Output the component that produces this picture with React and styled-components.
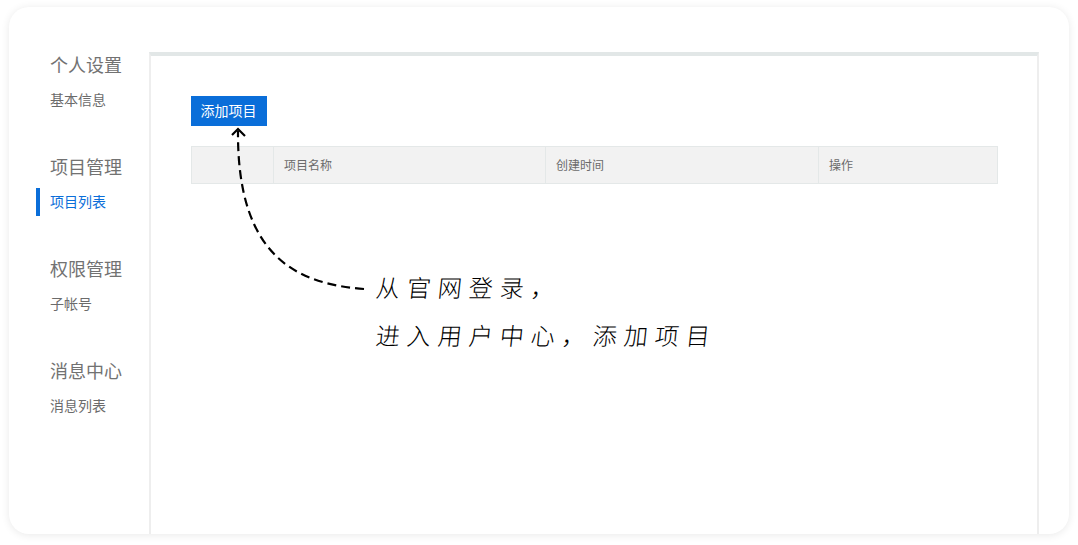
import styled, { createGlobalStyle } from "styled-components";

const GlobalStyle = createGlobalStyle`
  html, body {
    margin: 0;
    padding: 0;
    background: #fff;
  }
  body {
    font-family: "Noto Sans CJK SC", "Liberation Sans", sans-serif;
    overflow: hidden;
  }
`;

const Page = styled.div`
  box-sizing: border-box;
  width: 1078px;
  height: 545px;
  padding: 7px 9px 11px;
`;
const Card = styled.div`
  display: flex;
  height: 100%;
  padding-right: 30px;
  background: #fff;
  border-radius: 20px;
  box-shadow: 0 1px 8px rgba(0, 0, 0, 0.09);
  overflow: hidden;
`;
const Sidebar = styled.div`
  box-sizing: border-box;
  width: 140px;
  padding: 43px 0 0 41px;
  display: flex;
  flex-direction: column;
  gap: 38px;
`;
const Group = styled.div`
  display: flex;
  flex-direction: column;
  gap: 6px;
`;
const GroupTitle = styled.div`
  height: 30px;
  font-size: 18px;
  line-height: 28px;
  color: #727272;
`;
const GroupItem = styled.div`
  position: relative;
  height: 28px;
  font-size: 14px;
  line-height: 26px;
  color: ${(props) => (props.$active ? "#0a6ed9" : "#6b6b6b")};
  &::before {
    content: "";
    display: ${(props) => (props.$active ? "block" : "none")};
    position: absolute;
    left: -14px;
    top: 0;
    width: 4px;
    height: 28px;
    background: #0a6ed9;
  }
`;
const Panel = styled.div`
  position: relative;
  box-sizing: border-box;
  width: 890px;
  margin-top: 45px;
  padding: 40px 40px 0;
  background: #fff;
  border-top: 4px solid #e2e7e7;
  border-left: 2px solid #eeeeee;
  border-right: 2px solid #eeeeee;
`;
const AddButton = styled.button`
  display: block;
  width: 76px;
  height: 30px;
  padding: 0 1px 2px 0;
  border: none;
  background: #0a6ed9;
  color: #fff;
  font-family: inherit;
  font-size: 14px;
`;
const TableHead = styled.div`
  box-sizing: border-box;
  display: grid;
  grid-template-columns: 81px 272px 273px 1fr;
  width: 807px;
  height: 38px;
  margin-top: 20px;
  background: #f2f2f2;
  border: 1px solid #e4e8e8;
`;
const HeadCell = styled.div`
  padding-left: 10px;
  font-size: 12px;
  line-height: 36px;
  color: #6b6b6b;
  & + & {
    border-left: 1px solid #e4e8e8;
  }
`;
const Arrow = styled.svg`
  position: absolute;
  left: -151px;
  top: -56px;
  pointer-events: none;
`;
const Note = styled.div`
  margin: 86px 0 0 185px;
  display: flex;
  flex-direction: column;
  gap: 14px;
`;
const NoteLine = styled.div`
  font-family: "Noto Sans CJK SC", sans-serif;
  font-weight: 300;
  font-size: 24px;
  line-height: 34px;
  letter-spacing: 7px;
  color: #000;
  white-space: nowrap;
  transform: skewX(-6deg);
  transform-origin: left center;
`;

const groups = [
  { title: "个人设置", items: ["基本信息"] },
  { title: "项目管理", items: ["项目列表"], active: "项目列表" },
  { title: "权限管理", items: ["子帐号"] },
  { title: "消息中心", items: ["消息列表"] },
];

const App = () => {
  return (
    <Page>
      <GlobalStyle />
      <Card>
        <Sidebar>
          {groups.map((group) => (
            <Group key={group.title}>
              <GroupTitle>{group.title}</GroupTitle>
              {group.items.map((item) => (
                <GroupItem key={item} $active={item === group.active}>
                  {item}
                </GroupItem>
              ))}
            </Group>
          ))}
        </Sidebar>
        <Panel>
          <AddButton>添加项目</AddButton>
          <TableHead>
            <HeadCell />
            <HeadCell>项目名称</HeadCell>
            <HeadCell>创建时间</HeadCell>
            <HeadCell>操作</HeadCell>
          </TableHead>
          <Note>
            <NoteLine>从官网登录，</NoteLine>
            <NoteLine>进入用户中心，添加项目</NoteLine>
          </Note>
          <Arrow width="400" height="300" viewBox="0 0 400 300" fill="none" stroke="#000" strokeWidth="2.200">
            <path d="M364 289 C300 284 237 260 238 131" strokeDasharray="9 5" />
            <path d="M232 135 L238 129 L245 136" />
          </Arrow>
        </Panel>
      </Card>
    </Page>
  );
};

export default App;
